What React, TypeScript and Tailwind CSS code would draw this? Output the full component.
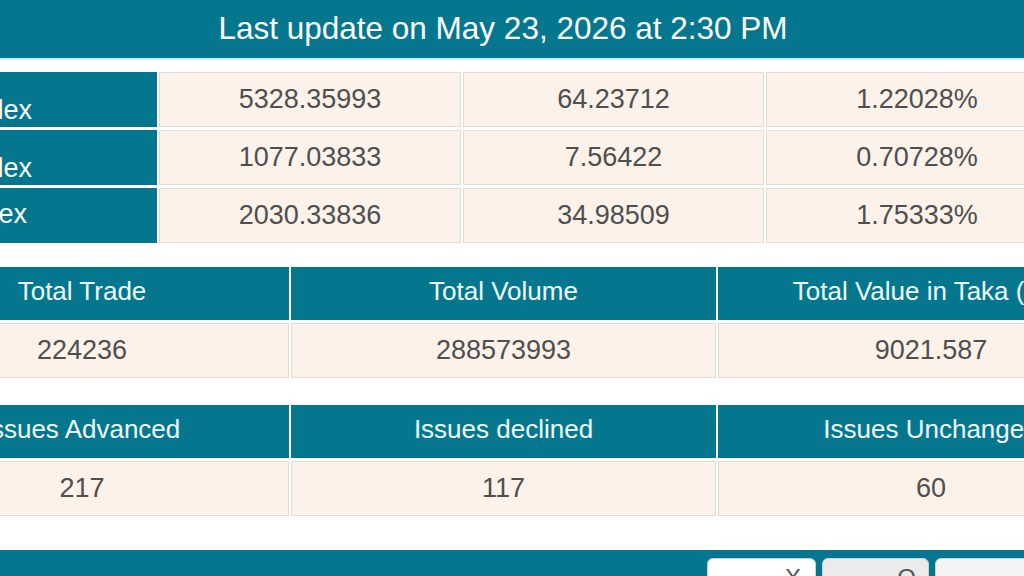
import React from 'react';

const indexRows = [
  { label: 'Index', value: '5328.35993', change: '64.23712', pct: '1.22028%', low: true, pad: 'pl-[26px]' },
  { label: 'Index', value: '1077.03833', change: '7.56422', pct: '0.70728%', low: true, pad: 'pl-[26px]' },
  { label: 'Index', value: '2030.33836', change: '34.98509', pct: '1.75333%', low: false, pad: 'pl-[21px]' },
];

const summaryTables = [
  {
    heads: ['Total Trade', 'Total Volume', 'Total Value in Taka (mn)'],
    values: ['224236', '288573993', '9021.587'],
  },
  {
    heads: ['Issues Advanced', 'Issues declined', 'Issues Unchanged'],
    values: ['217', '117', '60'],
  },
];

// teal headers + beige cells, like the old DSE market summary widget
const App: React.FC = () => {
  return (
    <div className="w-[1024px] h-[576px] overflow-hidden bg-white font-['Liberation_Sans',Arial,sans-serif]">
      {/* ── UPDATE BANNER ── */}
      <div className="h-[60px] bg-[#04778f] border-b-2 border-[#c9eef5] flex items-center justify-center pr-[18px]">
        <span className="text-[31.5px] text-white leading-none">Last update on May 23, 2026 at 2:30 PM</span>
      </div>

      {/* ── INDEX TABLE ── */}
      <div className="mt-[12px] ml-[-60px] grid grid-cols-[217px_302px_301px_302px] gap-x-[2px] gap-y-[3px]">
        {indexRows.map((r, i) => (
          <React.Fragment key={i}>
            <div className={`h-[55px] bg-[#04778f] flex ${r.low ? 'items-end pb-[3px]' : 'items-center'} ${r.pad} text-[27px] text-white leading-none`}>
              <span className={r.low ? '' : 'pb-[2px]'}>{r.label}</span>
            </div>
            <div className="h-[55px] bg-[#fcf2e9] border border-[#e4dbd0] flex items-center justify-center text-[27px] text-[#4f4f4f]">{r.value}</div>
            <div className="h-[55px] bg-[#fcf2e9] border border-[#e4dbd0] flex items-center justify-center text-[27px] text-[#4f4f4f]">{r.change}</div>
            <div className="h-[55px] bg-[#fcf2e9] border border-[#e4dbd0] flex items-center justify-center text-[27px] text-[#4f4f4f]">{r.pct}</div>
          </React.Fragment>
        ))}
      </div>

      {/* ── SUMMARY TABLES ── */}
      {summaryTables.map((t, ti) => (
        <div
          key={ti}
          className={`${ti === 0 ? 'mt-[24px]' : 'mt-[27px]'} ml-[-125px] grid grid-cols-[414px_425px_426px] gap-x-[2px] gap-y-[3px]`}
        >
          {t.heads.map((h) => (
            <div key={h} className="h-[53px] bg-[#04778f] flex items-center justify-center text-[26px] text-[#f0fbfd] whitespace-nowrap pb-[4px]">
              {h}
            </div>
          ))}
          {t.values.map((v, vi) => (
            <div key={vi} className="h-[55px] bg-[#fcf2e9] border border-[#e4dbd0] flex items-center justify-center text-[27px] text-[#4f4f4f]">
              {v}
            </div>
          ))}
        </div>
      ))}

      {/* ── BOTTOM BAR ── */}
      <div className="mt-[34px] h-[40px] bg-[#04778f] flex justify-start gap-[6px] pt-[8px] pl-[707px]">
        <div className="w-[109px] h-[40px] shrink-0 rounded-[6px] bg-white border border-[#cfcfcf] flex justify-end pr-[14px] pt-[7px] text-[24px] leading-none text-[#555]">X</div>
        <div className="w-[107px] h-[40px] shrink-0 rounded-[6px] bg-[#ebebeb] border border-[#cfcfcf] flex justify-end pr-[12px] pt-[7px] text-[24px] leading-none text-[#555]">O</div>
        <div className="w-[100px] h-[40px] shrink-0 rounded-[6px] bg-[#f4f4f4] border border-[#cfcfcf]" />
      </div>
    </div>
  );
};

export default App;
